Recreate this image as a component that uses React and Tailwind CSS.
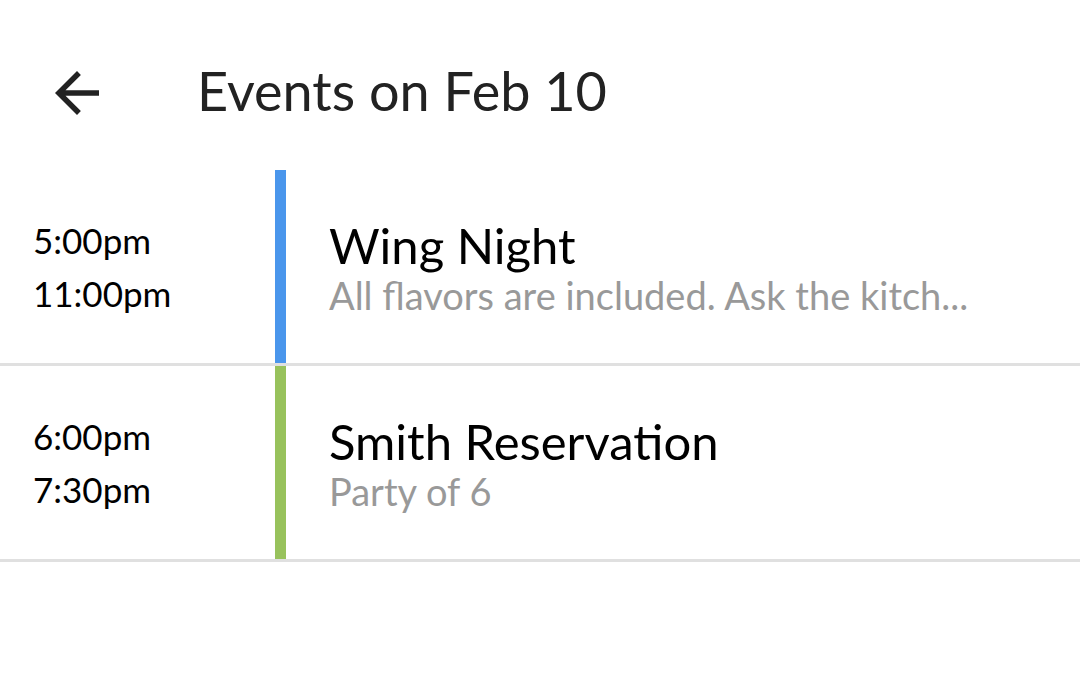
import React from 'react';

const events = [
  {
    id: 1,
    start: '5:00pm',
    end: '11:00pm',
    title: 'Wing Night',
    note: 'All flavors are included. Ask the kitch...',
    color: 'bg-[#4a96ec]',
  },
  {
    id: 2,
    start: '6:00pm',
    end: '7:30pm',
    title: 'Smith Reservation',
    note: 'Party of 6',
    color: 'bg-[#98c25c]',
  },
];

function BackArrow() {
  return (
    <svg viewBox="0 0 24 24" className="w-[66px] h-[66px] fill-[#222]">
      <path d="M20 11H7.83l5.59-5.59L12 4l-8 8 8 8 1.41-1.41L7.83 13H20v-2z" />
    </svg>
  );
}

export default function App() {
  return (
    <div className="w-[1080px] h-[685px] bg-white font-['Lato',sans-serif] overflow-hidden">
      <div className="h-[170px] flex items-start pt-[60px]">
        <button className="ml-[44px]">
          <BackArrow />
        </button>
        <h1 className="ml-[87px] mt-[2px] text-[54px] leading-[58px] text-[#222] font-normal">
          Events on Feb 10
        </h1>
      </div>

      <div>
        {events.map((ev) => (
          <div key={ev.id} className="border-b-[3px] border-[#e0e0e0]">
            <div className="flex h-[193px]">
              <div className="w-[275px] flex flex-col justify-center pl-[33px] text-[35px] leading-[53px] text-black">
                <span>{ev.start}</span>
                <span>{ev.end}</span>
              </div>
              <div className={`w-[11px] ${ev.color}`} />
              <div className="flex-1 min-w-0 flex flex-col justify-center pl-[43px] pr-[60px]">
                <p className="text-[49px] leading-[56px] text-black whitespace-nowrap">{ev.title}</p>
                <p className="text-[38px] leading-[44px] text-[#999] whitespace-nowrap">{ev.note}</p>
              </div>
            </div>
          </div>
        ))}
      </div>
    </div>
  );
}
